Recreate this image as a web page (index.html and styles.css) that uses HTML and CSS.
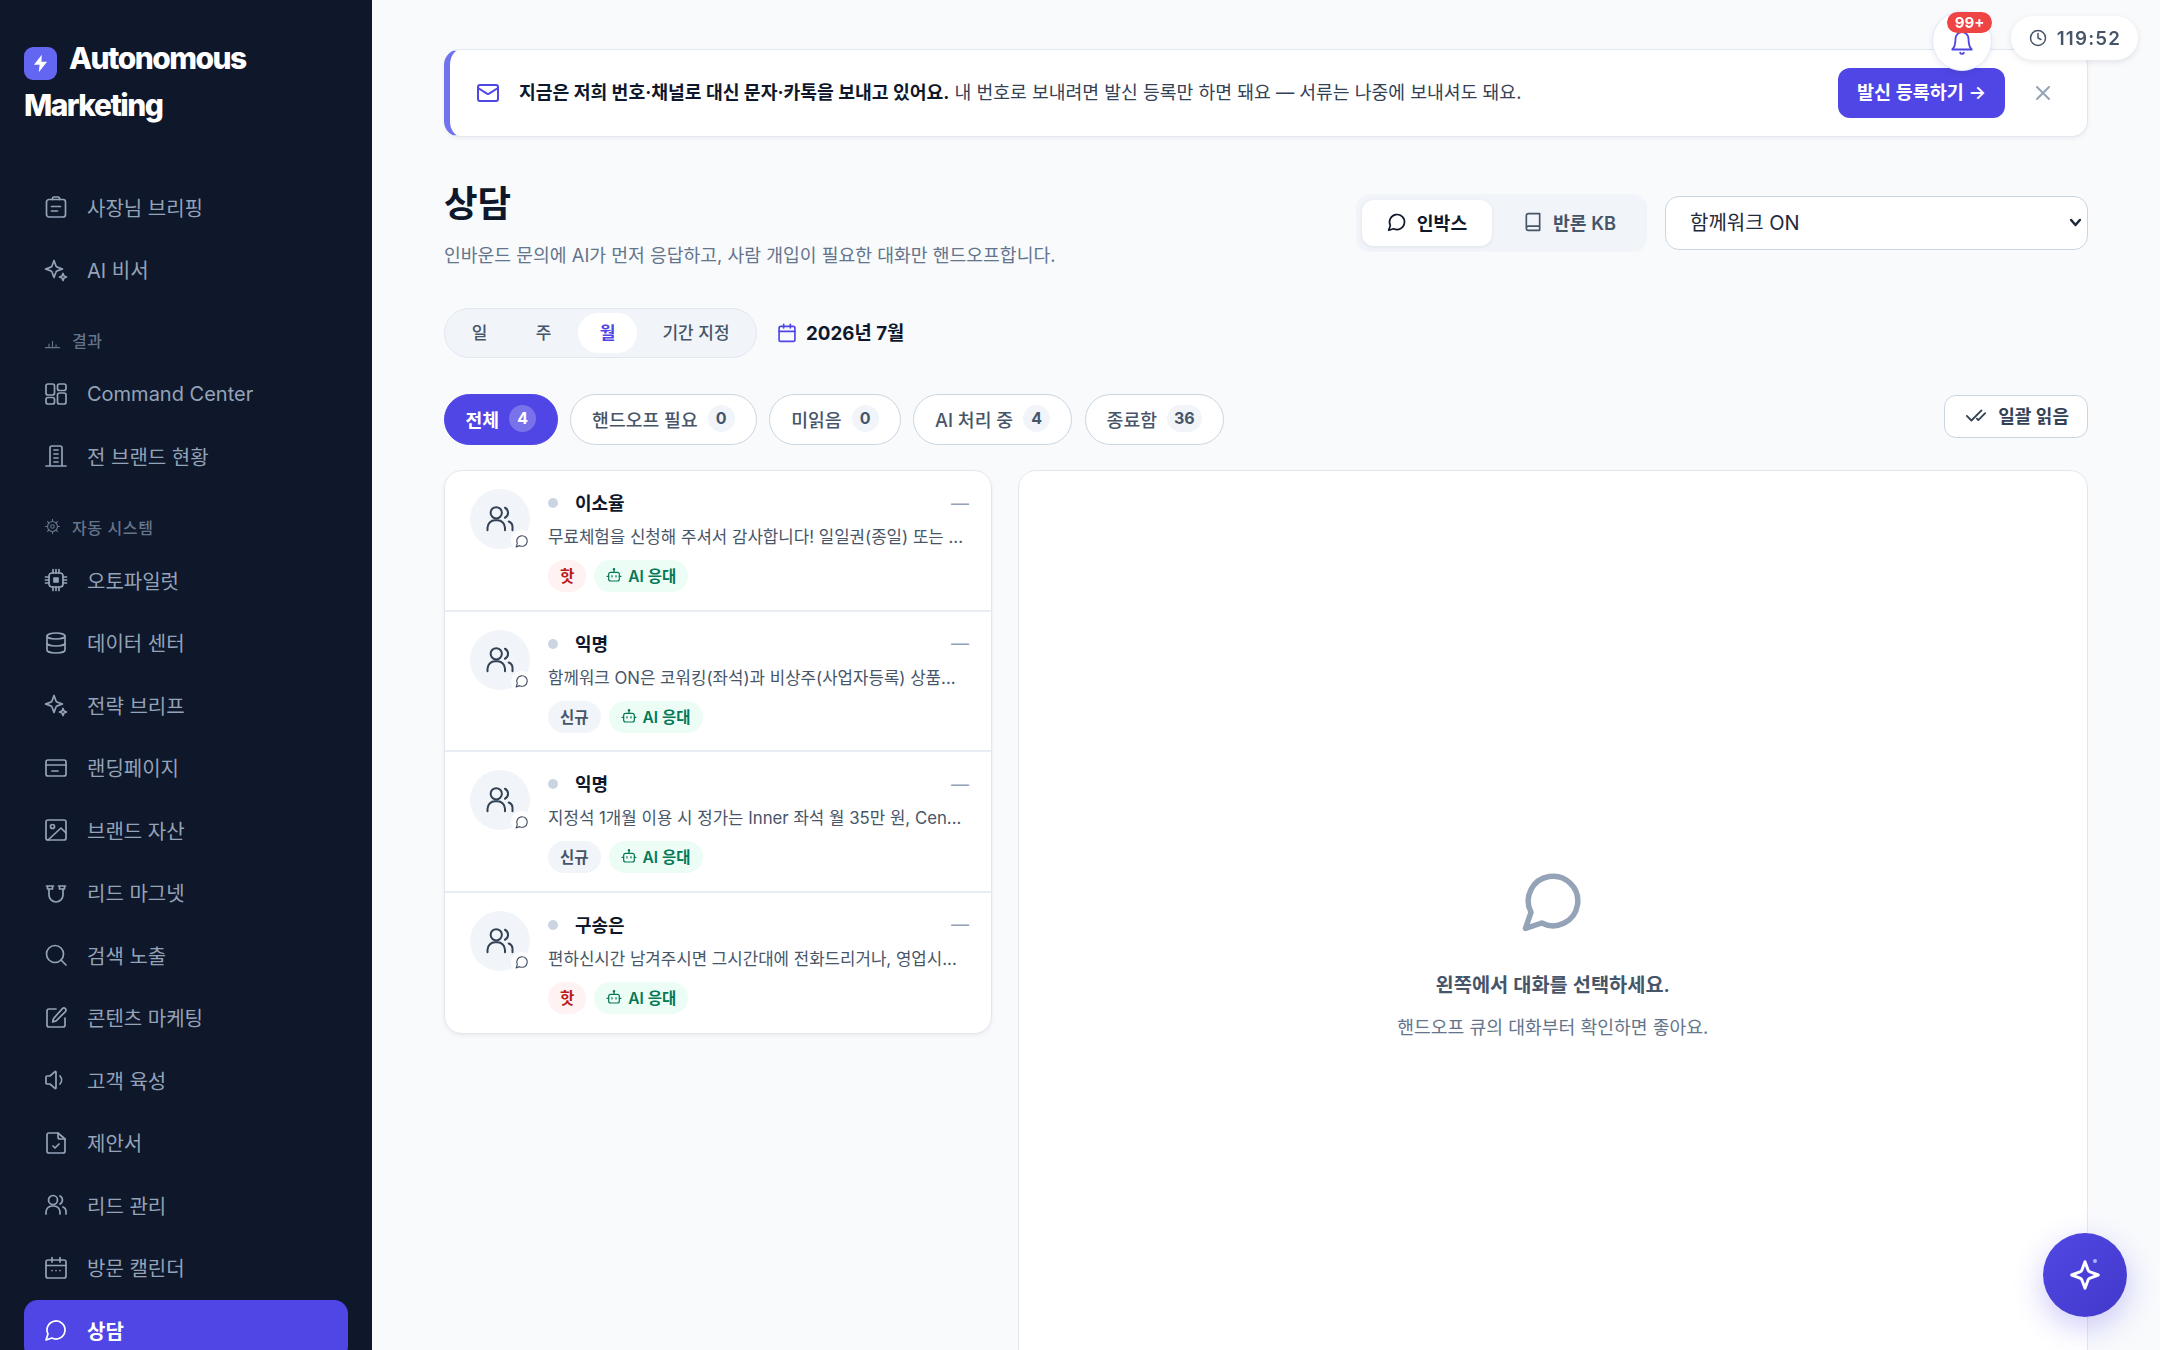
FILE: index.html
```html
<!DOCTYPE html>
<html lang="ko">
<head>
  <meta charset="UTF-8">
  <title>상담 - Autonomous Marketing</title>
  <link rel="stylesheet" href="styles.css">
</head>
<body>
  <svg class="sprite" xmlns="http://www.w3.org/2000/svg">
    <symbol id="i-brief" viewBox="0 0 24 24"><path d="M8.500 4.500V3.500a1.500 1.500 0 0 1 1.500-1.500h4a1.500 1.500 0 0 1 1.500 1.500v1"/><rect x="2.500" y="4.500" width="19" height="17.500" rx="2.500"/><path d="M7.500 11.500h9M7.500 16h6"/></symbol>
    <symbol id="i-sparkles" viewBox="0 0 24 24"><path d="M10 2.5l1.9 5.3a2 2 0 0 0 1.3 1.3L18.5 11l-5.3 1.9a2 2 0 0 0-1.3 1.3L10 19.5l-1.9-5.3a2 2 0 0 0-1.3-1.3L1.5 11l5.3-1.9a2 2 0 0 0 1.3-1.3z"/><path d="M19 15.5l1 2.5 2.5 1-2.5 1-1 2.5-1-2.5-2.5-1 2.5-1z"/></symbol>
    <symbol id="i-chart" viewBox="0 0 24 24"><path d="M2 22h20M7 22v-5M12 22v-9M17 22v-4"/></symbol>
    <symbol id="i-dashboard" viewBox="0 0 24 24"><rect x="2" y="2" width="8.5" height="11" rx="2"/><rect x="13.5" y="2" width="8.5" height="6.5" rx="2"/><rect x="13.5" y="11" width="8.5" height="11" rx="2"/><rect x="2" y="15.5" width="8.5" height="6.5" rx="2"/></symbol>
    <symbol id="i-building" viewBox="0 0 24 24"><path d="M6 22V4a2 2 0 0 1 2-2h8a2 2 0 0 1 2 2v18M2 22h20M10 6h4M10 10h4M10 14h4M10 18h4"/></symbol>
    <symbol id="i-cog" viewBox="0 0 24 24"><circle cx="12" cy="12" r="7"/><circle cx="12" cy="12" r="2.5"/><path d="M12 2v3M12 19v3M2 12h3M19 12h3M5 5l2 2M17 17l2 2M19 5l-2 2M7 17l-2 2"/></symbol>
    <symbol id="i-cpu" viewBox="0 0 24 24"><rect x="5" y="5" width="14" height="14" rx="3"/><rect x="10" y="10" width="4" height="4" fill="currentColor"/><path d="M9 1.5V5M12 1.5V5M15 1.5V5M9 19v3.5M12 19v3.5M15 19v3.5M1.5 9H5M1.5 12H5M1.5 15H5M19 9h3.5M19 12h3.5M19 15h3.5"/></symbol>
    <symbol id="i-database" viewBox="0 0 24 24"><ellipse cx="12" cy="5" rx="9" ry="3"/><path d="M3 5v14a9 3 0 0 0 18 0V5"/><path d="M3 12a9 3 0 0 0 18 0"/></symbol>
    <symbol id="i-panel" viewBox="0 0 24 24"><rect x="2" y="4" width="20" height="16" rx="2"/><path d="M2 9h20M8 15h6"/></symbol>
    <symbol id="i-image" viewBox="0 0 24 24"><rect x="2" y="2" width="20" height="20" rx="2"/><circle cx="8.5" cy="8.5" r="2"/><path d="M22 15l-5-5L4 22"/></symbol>
    <symbol id="i-magnet" viewBox="0 0 24 24"><path d="M2.500 5h7M14.500 5h7M3.500 5v3h5V5M15.500 5v3h5V5"/><path d="M5 8v6a7 7 0 0 0 14 0V8"/></symbol>
    <symbol id="i-search" viewBox="0 0 24 24"><circle cx="11" cy="11" r="8.5"/><path d="M22 22l-5-5"/></symbol>
    <symbol id="i-pen" viewBox="0 0 24 24"><path d="M12 3H5a2 2 0 0 0-2 2v14a2 2 0 0 0 2 2h14a2 2 0 0 0 2-2v-7"/><path d="M18.4 2.6a2.1 2.1 0 1 1 3 3L12.4 14.6a2 2 0 0 1-.9.5l-2.9.8.8-2.9a2 2 0 0 1 .5-.9z"/></symbol>
    <symbol id="i-speaker" viewBox="0 0 24 24"><path d="M12 4v16a.6.6 0 0 1-1 .4L6 16H3a1 1 0 0 1-1-1V9a1 1 0 0 1 1-1h3l5-4.400a.6.6 0 0 1 1 .4z"/><path d="M16 8a6 6 0 0 1 0 8"/></symbol>
    <symbol id="i-filecheck" viewBox="0 0 24 24"><path d="M14 2H5a2 2 0 0 0-2 2v16a2 2 0 0 0 2 2h14a2 2 0 0 0 2-2V8z"/><path d="M14 2v4a2 2 0 0 0 2 2h5M9 15l2 2 4-4"/></symbol>
    <symbol id="i-users" viewBox="0 0 24 24"><circle cx="9" cy="7" r="4.500"/><path d="M2 21v-2a6 6 0 0 1 6-6h2a6 6 0 0 1 6 6v2"/><path d="M16 3a4.500 4.500 0 0 1 0 8M19 14a5 5 0 0 1 3 5v2"/></symbol>
    <symbol id="i-calendar" viewBox="0 0 24 24"><rect x="2.500" y="4" width="19" height="18" rx="2"/><path d="M8 1.500V6M16 1.500V6M2.500 10h19"/></symbol>
    <symbol id="i-calendar-dots" viewBox="0 0 24 24"><rect x="2" y="4" width="20" height="18" rx="2"/><path d="M8 1.500V6M16 1.500V6M2 9.500h20M8 14.500h.01M12 14.500h.01M16 14.500h.01"/></symbol>
    <symbol id="i-chat" viewBox="0 0 24 24"><path d="M7.900 20A9 9 0 1 0 4 16.100L2 22z"/></symbol>
    <symbol id="i-mail" viewBox="0 0 24 24"><rect x="2" y="4" width="20" height="16" rx="2"/><path d="M22 7l-8.970 5.700a2 2 0 0 1-2.060 0L2 7"/></symbol>
    <symbol id="i-close" viewBox="0 0 24 24"><path d="M18 6L6 18M6 6l12 12"/></symbol>
    <symbol id="i-bell" viewBox="0 0 24 24"><path d="M6 8a6 6 0 0 1 12 0c0 7 2 9 3 10H3c1-1 3-3 3-10"/><path d="M10.300 21a1.900 1.900 0 0 0 3.400 0"/></symbol>
    <symbol id="i-clock" viewBox="0 0 24 24"><circle cx="12" cy="12" r="10"/><path d="M12 6v6l4 2"/></symbol>
    <symbol id="i-book" viewBox="0 0 24 24"><path d="M4 19.500v-15A2.500 2.500 0 0 1 6.500 2H20v20H6.500a2.500 2.500 0 0 1 0-5H20"/></symbol>
    <symbol id="i-checks" viewBox="0 0 24 24"><path d="M18 7L7 18l-5-5M22 10l-7.500 7.500L13 16"/></symbol>
    <symbol id="i-bot" viewBox="0 0 24 24"><path d="M12 8V4"/><circle cx="12" cy="3.500" r="1"/><rect x="4" y="8" width="16" height="13" rx="3"/><path d="M1.500 14H4M20 14h2.500M9 13v2M15 13v2"/></symbol>
    <symbol id="i-sparkle" viewBox="0 0 24 24"><path d="M12 2l2.300 6.200a2.500 2.500 0 0 0 1.500 1.500L22 12l-6.200 2.300a2.500 2.500 0 0 0-1.500 1.500L12 22l-2.300-6.200a2.500 2.500 0 0 0-1.500-1.500L2 12l6.200-2.300a2.500 2.500 0 0 0 1.500-1.500z"/></symbol>
    <symbol id="i-chevron" viewBox="0 0 24 24"><path d="M5 8l7 8 7-8"/></symbol>
  </svg>

  <div class="app">
    <aside class="sidebar">
      <div class="logo">
        <span class="logo-mark"><svg viewBox="0 0 24 24"><path d="M13.500 2L4.500 13.500h6.500L10 22l9.500-12H13z"/></svg></span>
        Autonomous Marketing
      </div>
      <nav class="nav">
        <a class="nav-item"><svg class="ico"><use href="#i-brief"/></svg>사장님 브리핑</a>
        <a class="nav-item"><svg class="ico"><use href="#i-sparkles"/></svg>AI 비서</a>
        <div class="nav-label"><svg class="ico-sm"><use href="#i-chart"/></svg>결과</div>
        <a class="nav-item"><svg class="ico"><use href="#i-dashboard"/></svg>Command Center</a>
        <a class="nav-item"><svg class="ico"><use href="#i-building"/></svg>전 브랜드 현황</a>
        <div class="nav-label"><svg class="ico-sm"><use href="#i-cog"/></svg>자동 시스템</div>
        <a class="nav-item"><svg class="ico"><use href="#i-cpu"/></svg>오토파일럿</a>
        <a class="nav-item"><svg class="ico"><use href="#i-database"/></svg>데이터 센터</a>
        <a class="nav-item"><svg class="ico"><use href="#i-sparkles"/></svg>전략 브리프</a>
        <a class="nav-item"><svg class="ico"><use href="#i-panel"/></svg>랜딩페이지</a>
        <a class="nav-item"><svg class="ico"><use href="#i-image"/></svg>브랜드 자산</a>
        <a class="nav-item"><svg class="ico"><use href="#i-magnet"/></svg>리드 마그넷</a>
        <a class="nav-item"><svg class="ico"><use href="#i-search"/></svg>검색 노출</a>
        <a class="nav-item"><svg class="ico"><use href="#i-pen"/></svg>콘텐츠 마케팅</a>
        <a class="nav-item"><svg class="ico"><use href="#i-speaker"/></svg>고객 육성</a>
        <a class="nav-item"><svg class="ico"><use href="#i-filecheck"/></svg>제안서</a>
        <a class="nav-item"><svg class="ico"><use href="#i-users"/></svg>리드 관리</a>
        <a class="nav-item"><svg class="ico"><use href="#i-calendar-dots"/></svg>방문 캘린더</a>
        <a class="nav-item active"><svg class="ico"><use href="#i-chat"/></svg>상담</a>
      </nav>
    </aside>

    <main class="main">
      <section class="banner">
        <svg class="banner-ico"><use href="#i-mail"/></svg>
        <p class="banner-text"><strong>지금은 저희 번호·채널로 대신 문자·카톡을 보내고 있어요.</strong> 내 번호로 보내려면 발신 등록만 하면 돼요 — 서류는 나중에 보내셔도 돼요.</p>
        <button class="banner-btn">발신 등록하기 →</button>
        <svg class="banner-close"><use href="#i-close"/></svg>
      </section>

      <header class="page-head">
        <div>
          <h1>상담</h1>
          <p class="subtitle">인바운드 문의에 AI가 먼저 응답하고, 사람 개입이 필요한 대화만 핸드오프합니다.</p>
        </div>
        <div class="head-right">
          <div class="view-tabs">
            <button class="view-tab on"><svg><use href="#i-chat"/></svg>인박스</button>
            <button class="view-tab"><svg><use href="#i-book"/></svg>반론 KB</button>
          </div>
          <div class="select-wrap">
            <select class="brand-select"><option>함께워크 ON</option></select>
            <svg class="select-arrow"><use href="#i-chevron"/></svg>
          </div>
        </div>
      </header>

      <div class="period-row">
        <div class="period-tabs">
          <span class="period">일</span>
          <span class="period">주</span>
          <span class="period on">월</span>
          <span class="period wide">기간 지정</span>
        </div>
        <svg class="period-ico"><use href="#i-calendar"/></svg>
        <strong class="period-value">2026년 7월</strong>
      </div>

      <div class="filter-row">
        <button class="filter on">전체 <span class="count">4</span></button>
        <button class="filter">핸드오프 필요 <span class="count">0</span></button>
        <button class="filter">미읽음 <span class="count">0</span></button>
        <button class="filter">AI 처리 중 <span class="count">4</span></button>
        <button class="filter">종료함 <span class="count">36</span></button>
        <button class="read-all"><svg><use href="#i-checks"/></svg>일괄 읽음</button>
      </div>

      <div class="inbox">
        <div class="thread-list">
          <article class="thread">
            <div class="avatar"><svg class="avatar-ico"><use href="#i-users"/></svg><span class="avatar-badge"><svg><use href="#i-chat"/></svg></span></div>
            <div class="thread-body">
              <div class="thread-top"><span class="dot"></span><b class="name">이소율</b><span class="time">—</span></div>
              <p class="preview">무료체험을 신청해 주셔서 감사합니다! 일일권(종일) 또는 ...</p>
              <div class="tags"><span class="tag hot">핫</span><span class="tag ai"><svg><use href="#i-bot"/></svg>AI 응대</span></div>
            </div>
          </article>
          <article class="thread">
            <div class="avatar"><svg class="avatar-ico"><use href="#i-users"/></svg><span class="avatar-badge"><svg><use href="#i-chat"/></svg></span></div>
            <div class="thread-body">
              <div class="thread-top"><span class="dot"></span><b class="name">익명</b><span class="time">—</span></div>
              <p class="preview">함께워크 ON은 코워킹(좌석)과 비상주(사업자등록) 상품...</p>
              <div class="tags"><span class="tag new">신규</span><span class="tag ai"><svg><use href="#i-bot"/></svg>AI 응대</span></div>
            </div>
          </article>
          <article class="thread">
            <div class="avatar"><svg class="avatar-ico"><use href="#i-users"/></svg><span class="avatar-badge"><svg><use href="#i-chat"/></svg></span></div>
            <div class="thread-body">
              <div class="thread-top"><span class="dot"></span><b class="name">익명</b><span class="time">—</span></div>
              <p class="preview">지정석 1개월 이용 시 정가는 Inner 좌석 월 35만 원, Cen...</p>
              <div class="tags"><span class="tag new">신규</span><span class="tag ai"><svg><use href="#i-bot"/></svg>AI 응대</span></div>
            </div>
          </article>
          <article class="thread">
            <div class="avatar"><svg class="avatar-ico"><use href="#i-users"/></svg><span class="avatar-badge"><svg><use href="#i-chat"/></svg></span></div>
            <div class="thread-body">
              <div class="thread-top"><span class="dot"></span><b class="name">구송은</b><span class="time">—</span></div>
              <p class="preview">편하신시간 남겨주시면 그시간대에 전화드리거나, 영업시...</p>
              <div class="tags"><span class="tag hot">핫</span><span class="tag ai"><svg><use href="#i-bot"/></svg>AI 응대</span></div>
            </div>
          </article>
        </div>

        <div class="detail">
          <svg class="detail-ico"><use href="#i-chat"/></svg>
          <p class="detail-title">왼쪽에서 대화를 선택하세요.</p>
          <p class="detail-sub">핸드오프 큐의 대화부터 확인하면 좋아요.</p>
        </div>
      </div>
    </main>
  </div>

  <div class="bell">
    <svg><use href="#i-bell"/></svg>
    <span class="bell-badge">99+</span>
  </div>
  <div class="timer"><svg><use href="#i-clock"/></svg>119:52</div>
  <button class="fab">
    <svg><use href="#i-sparkle"/></svg>
    <span class="fab-dot"></span>
  </button>
</body>
</html>
```

FILE: styles.css
```css
* {
  box-sizing: border-box;
}
html, body {
  margin: 0;
  height: 100%;
  overflow: hidden;
}
body {
  font-family: Inter, "Noto Sans CJK KR", sans-serif;
  background: #f8fafc;
  color: #0f172a;
}
p, h1 {
  margin: 0;
}
button {
  font-family: inherit;
  cursor: pointer;
}
svg {
  fill: none;
  stroke: currentColor;
  stroke-width: 2;
  stroke-linecap: round;
  stroke-linejoin: round;
}
.sprite {
  display: none;
}
.app {
  display: flex;
  height: 1350px;
}

/* sidebar */
.sidebar {
  width: 372px;
  flex-shrink: 0;
  background: #0f172a;
  padding: 35px 24px 0;
  overflow: hidden;
}
.logo {
  height: 142px;
  color: #fff;
  font-size: 30px;
  font-weight: 800;
  line-height: 47px;
  letter-spacing: -1.55px;
}
.logo-mark {
  display: inline-flex;
  align-items: center;
  justify-content: center;
  width: 33px;
  height: 33px;
  margin-right: 7px;
  border-radius: 9px;
  background: #6366f1;
  vertical-align: -5px;
}
.logo-mark svg {
  width: 21px;
  height: 21px;
  fill: #fff;
  stroke: none;
}
.nav-item {
  display: flex;
  align-items: center;
  gap: 19px;
  height: 60px;
  margin-bottom: 2.5px;
  padding-left: 20px;
  border-radius: 14px;
  color: #94a3b8;
  font-size: 20px;
  font-weight: 400;
}
.nav-item.active {
  background: #4f46e5;
  color: #fff;
  font-weight: 600;
}
.ico {
  width: 24px;
  height: 24px;
  flex-shrink: 0;
  stroke-width: 1.7;
}
.nav-label {
  display: flex;
  align-items: center;
  gap: 11px;
  height: 26px;
  margin: 28.5px 0 9.5px;
  padding: 0 0 2px 20px;
  color: #64748b;
  font-size: 16px;
  font-weight: 500;
  letter-spacing: 0.6px;
}
.ico-sm {
  width: 17px;
  height: 17px;
  stroke-width: 1.6;
}

/* main column */
.main {
  flex: 1;
  min-width: 0;
  padding: 49px 72px 0;
}
.banner {
  display: flex;
  align-items: center;
  height: 88px;
  margin-bottom: 45px;
  padding: 0 32px 0 26px;
  background: #fff;
  border: 1px solid #e2e8f0;
  border-left: 6px solid #6f74ee;
  border-radius: 16px;
  box-shadow: 0 2px 4px rgba(15, 23, 42, 0.05);
}
.banner-ico {
  width: 24px;
  height: 24px;
  margin-right: 19px;
  color: #4f46e5;
}
.banner-text {
  flex: 1;
  padding-bottom: 4px;
  font-size: 18.25px;
  color: #334155;
}
.banner-text strong {
  color: #0f172a;
  font-weight: 700;
}
.banner-btn {
  height: 50px;
  width: 167px;
  padding: 0 0 4px;
  border: 0;
  border-radius: 12px;
  background: #4f46e5;
  color: #fff;
  font-size: 18.5px;
  font-weight: 600;
}
.banner-close {
  width: 24px;
  height: 24px;
  margin-left: 26px;
  color: #94a3b8;
}
.page-head {
  display: flex;
  align-items: center;
  justify-content: space-between;
  margin-bottom: 41px;
}
h1 {
  font-size: 36.5px;
  font-weight: 700;
  line-height: 44px;
  margin-bottom: 17px;
}
.subtitle {
  font-size: 18.25px;
  line-height: 24px;
  color: #64748b;
}
.head-right {
  display: flex;
  align-items: center;
  gap: 18px;
  margin-bottom: 3px;
}
.view-tabs {
  display: flex;
  padding: 6px;
  background: #f1f5f9;
  border-radius: 14px;
}
.view-tab {
  display: flex;
  align-items: center;
  justify-content: center;
  gap: 10px;
  width: 130px;
  height: 46px;
  padding: 0 0 2px;
  border: 0;
  border-radius: 12px;
  background: none;
  color: #475569;
  font-size: 18.25px;
  font-weight: 600;
}
.view-tab svg {
  width: 20px;
  height: 20px;
}
.view-tab.on {
  background: #fff;
  color: #0f172a;
  box-shadow: 0 1px 4px rgba(15, 23, 42, 0.08);
}
.view-tab + .view-tab {
  width: 149px;
  padding-left: 6px;
}
.select-wrap {
  position: relative;
}
.brand-select {
  display: block;
  width: 423px;
  height: 54px;
  padding: 0 24px 1px;
  border: 1.5px solid #cbd5e1;
  border-radius: 14px;
  background: #fff;
  color: #1e293b;
  font-family: inherit;
  font-size: 20px;
  appearance: none;
}
.select-arrow {
  position: absolute;
  right: 5px;
  top: 19px;
  width: 15px;
  height: 15px;
  stroke-width: 4;
  color: #1e293b;
  pointer-events: none;
}

/* period + filters */
.period-row {
  display: flex;
  align-items: center;
  margin-bottom: 36px;
}
.period-tabs {
  display: flex;
  align-items: center;
  gap: 5px;
  width: 313px;
  height: 50px;
  padding: 0 5px;
  background: #f1f5f9;
  border: 1px solid #e2e8f0;
  border-radius: 25px;
}
.period {
  width: 59px;
  height: 40px;
  line-height: 40px;
  text-align: center;
  border-radius: 20px;
  color: #475569;
  font-size: 17px;
  font-weight: 500;
}
.period.on {
  background: #fff;
  color: #4f46e5;
  font-weight: 600;
}
.period.wide {
  width: 108px;
}
.period-ico {
  width: 20px;
  height: 20px;
  margin: 0 9px 0 20px;
  color: #4f46e5;
}
.period-value {
  padding-bottom: 4px;
  font-size: 18.75px;
  font-weight: 700;
}
.filter-row {
  display: flex;
  align-items: center;
  gap: 12.5px;
  margin-bottom: 25px;
}
.filter {
  display: flex;
  align-items: center;
  gap: 10px;
  height: 51px;
  padding: 0 21px 2px;
  border: 1.5px solid #cbd5e1;
  border-radius: 26px;
  background: #fff;
  color: #475569;
  font-size: 18.25px;
  font-weight: 500;
}
.filter.on {
  padding: 0 20.500px 2px;
  border-color: #4f46e5;
  background: #4f46e5;
  color: #fff;
  font-weight: 600;
}
.count {
  min-width: 27px;
  height: 27px;
  padding: 0 7px;
  line-height: 27px;
  border-radius: 14px;
  background: #f1f5f9;
  color: #475569;
  font-size: 16px;
  font-weight: 700;
  text-align: center;
}
.filter.on .count {
  background: rgba(255, 255, 255, 0.24);
  color: #fff;
}
.read-all {
  display: flex;
  align-items: center;
  gap: 11px;
  height: 43px;
  align-self: flex-start;
  margin: 1px 0 0 auto;
  padding: 0 18px 3px 20px;
  border: 1.5px solid #cbd5e1;
  border-radius: 12px;
  background: #fff;
  color: #334155;
  font-size: 18px;
  font-weight: 600;
}
.read-all svg {
  width: 22px;
  height: 22px;
}

/* thread list */
.inbox {
  display: flex;
  align-items: flex-start;
  gap: 25.500px;
}
.thread-list {
  width: 548px;
  flex-shrink: 0;
  background: #fff;
  border: 1px solid #e2e8f0;
  border-radius: 18px;
  box-shadow: 0 2px 4px rgba(15, 23, 42, 0.06);
  overflow: hidden;
}
.thread {
  display: flex;
  gap: 18px;
  height: 140.5px;
  padding: 18px 22px 0 25px;
  border-bottom: 2px solid #e8edf3;
}
.thread:last-child {
  border-bottom: 0;
}
.avatar {
  position: relative;
  width: 60px;
  height: 60px;
  flex-shrink: 0;
  display: flex;
  align-items: center;
  justify-content: center;
  border-radius: 50%;
  background: #f1f5f9;
  color: #334155;
}
.avatar-ico {
  width: 30px;
  height: 30px;
  stroke-width: 1.6;
}
.avatar-badge {
  position: absolute;
  right: -2px;
  bottom: -2px;
  display: flex;
  align-items: center;
  justify-content: center;
  width: 21px;
  height: 21px;
  border-radius: 50%;
  background: #fff;
}
.avatar-badge svg {
  width: 14px;
  height: 14px;
  stroke-width: 2;
  color: #475569;
}
.thread-body {
  flex: 1;
  min-width: 0;
}
.thread-top {
  display: flex;
  align-items: center;
  height: 28px;
}
.dot {
  width: 10px;
  height: 10px;
  margin-right: 17px;
  border-radius: 50%;
  background: #cbd5e1;
}
.name {
  margin-bottom: 2px;
  font-size: 18px;
  font-weight: 700;
}
.time {
  margin-left: auto;
  color: #94a3b8;
  font-size: 18px;
}
.preview {
  margin-top: 7px;
  font-size: 16.8px;
  line-height: 26px;
  color: #475569;
  white-space: nowrap;
}
.tags {
  display: flex;
  gap: 8px;
  margin-top: 10px;
}
.tag {
  display: flex;
  align-items: center;
  gap: 6px;
  height: 32px;
  padding: 0 12px 2px;
  border-radius: 16px;
  font-size: 15.500px;
  font-weight: 600;
}
.tag svg {
  width: 16px;
  height: 16px;
  stroke-width: 1.8;
}
.hot {
  background: #fef2f2;
  color: #b91c1c;
}
.new {
  background: #f1f5f9;
  color: #475569;
}
.ai {
  background: #ecfdf5;
  color: #047857;
}

/* empty detail */
.detail {
  flex: 1;
  height: 969px;
  display: flex;
  flex-direction: column;
  align-items: center;
  justify-content: center;
  background: #fff;
  border: 1px solid #e2e8f0;
  border-radius: 18px;
}
.detail-ico {
  width: 66px;
  height: 66px;
  color: #94a3b8;
  stroke-width: 2;
  margin-bottom: 37px;
}
.detail-title {
  font-size: 19.75px;
  font-weight: 600;
  color: #475569;
  line-height: 28px;
  margin-bottom: 14px;
}
.detail-sub {
  font-size: 18.25px;
  color: #64748b;
  line-height: 28px;
}

/* floating controls */
.bell {
  position: fixed;
  left: 1932px;
  top: 11px;
  width: 60px;
  height: 60px;
  display: flex;
  align-items: center;
  justify-content: center;
  padding-top: 4px;
  background: #fff;
  border: 1px solid #e0e7ff;
  border-radius: 50%;
  color: #4f46e5;
  box-shadow: 0 2px 6px rgba(15, 23, 42, 0.08);
}
.bell svg {
  width: 26px;
  height: 26px;
  stroke-width: 1.7;
}
.bell-badge {
  position: absolute;
  top: 0;
  right: -1px;
  width: 45px;
  height: 21px;
  line-height: 21px;
  text-align: center;
  border-radius: 11px;
  background: #ef4444;
  color: #fff;
  font-size: 15px;
  font-weight: 700;
}
.timer {
  position: fixed;
  left: 2011px;
  top: 16px;
  width: 127px;
  height: 44px;
  display: flex;
  align-items: center;
  justify-content: center;
  gap: 10px;
  padding-left: 1px;
  background: #fff;
  border-radius: 22px;
  color: #475569;
  font-size: 18.75px;
  font-weight: 600;
  letter-spacing: 1.2px;
  box-shadow: 0 2px 6px rgba(15, 23, 42, 0.1);
}
.timer svg {
  width: 18px;
  height: 18px;
}
.fab {
  position: fixed;
  left: 2043px;
  top: 1233px;
  width: 84px;
  height: 84px;
  display: flex;
  align-items: center;
  justify-content: center;
  border: 0;
  border-radius: 50%;
  background: linear-gradient(135deg, #5048e5, #4338ca);
  color: #fff;
  box-shadow: 0 10px 30px rgba(79, 70, 229, 0.28);
}
.fab svg {
  width: 32px;
  height: 32px;
  stroke-width: 2.2;
}
.fab-dot {
  position: absolute;
  left: 50px;
  top: 26px;
  width: 4px;
  height: 4px;
  border-radius: 50%;
  background: #a5b4fc;
}
```
